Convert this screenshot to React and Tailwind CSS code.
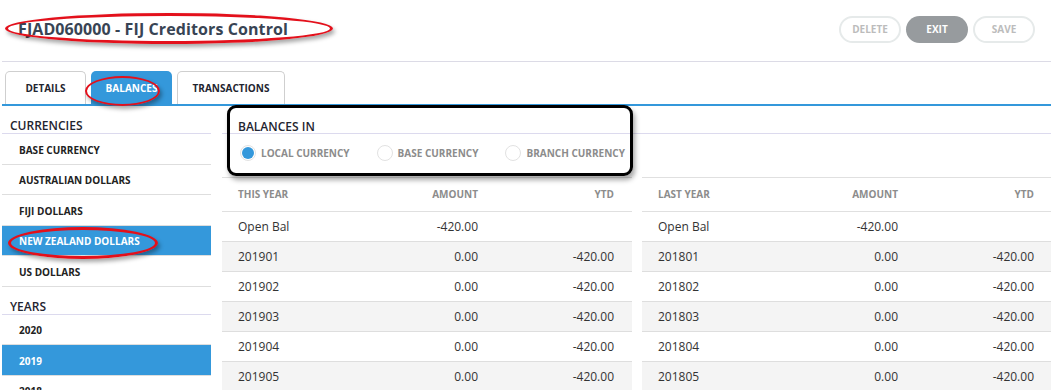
import React from 'react';

const currencies = ['BASE CURRENCY', 'AUSTRALIAN DOLLARS', 'FIJI DOLLARS', 'NEW ZEALAND DOLLARS', 'US DOLLARS'];
const years = ['2020', '2019', '2018', '2017'];

const thisYear = [
  { period: 'Open Bal', amount: '-420.00', ytd: '' },
  { period: '201901', amount: '0.00', ytd: '-420.00' },
  { period: '201902', amount: '0.00', ytd: '-420.00' },
  { period: '201903', amount: '0.00', ytd: '-420.00' },
  { period: '201904', amount: '0.00', ytd: '-420.00' },
  { period: '201905', amount: '0.00', ytd: '-420.00' },
];

const lastYear = thisYear.map((r) => ({ ...r, period: r.period.replace('2019', '2018') }));

function SideItem({ label, active }) {
  return (
    <div
      className={`h-[30.5px] flex items-center pt-[3px] pl-[17px] border-b border-[#dedede] text-[10px] font-bold ${
        active ? 'bg-[#3498db] text-white' : 'text-[#222]'
      }`}
    >
      {label}
    </div>
  );
}

function SideHeader({ label }) {
  return (
    <div className="h-[28px] flex items-end pl-[8px] border-b border-[#dcdaee] text-[12px] leading-[15px] font-semibold text-[#1f2530]">
      {label}
    </div>
  );
}

function Radio({ label, checked }) {
  return (
    <div className="flex items-center gap-[5px] mr-[27px]">
      <span className="w-[16px] h-[16px] rounded-full border border-[#e2e2e2] bg-white flex items-center justify-center">
        {checked && <span className="w-[12px] h-[12px] rounded-full bg-[#3498db]" />}
      </span>
      <span className="text-[10px] font-bold text-[#8c8c8c]">{label}</span>
    </div>
  );
}

function BalanceTable({ title, rows }) {
  return (
    <div className="w-[410px] shrink-0">
      <div className="grid grid-cols-[138px_136px_136px] h-[35px] items-center border-t border-b border-[#e0e0e0] text-[10px] font-bold text-[#8c8c8c]">
        <div className="pl-4">{title}</div>
        <div className="text-right pr-[18px]">AMOUNT</div>
        <div className="text-right pr-[18px]">YTD</div>
      </div>
      {rows.map((r, i) => (
        <div
          key={r.period}
          className={`grid grid-cols-[138px_136px_136px] h-[30px] items-center border-b border-[#dedede] text-[12px] text-[#333] ${
            i % 2 === 1 ? 'bg-[#f4f4f4]' : 'bg-white'
          }`}
        >
          <div className="pl-4">{r.period}</div>
          <div className="text-right pr-[18px]">{r.amount}</div>
          <div className="text-right pr-[18px]">{r.ytd}</div>
        </div>
      ))}
    </div>
  );
}

export default function App() {
  return (
    <div className="relative w-[1051px] h-[390px] overflow-hidden bg-white font-['Open_Sans',sans-serif]">
      <div className="pl-[2px]">
        {/* Title bar */}
        <div className="h-[62px] flex items-center justify-between pb-[4px] pl-4 pr-4 border-b border-[#dcdbe6]">
          <h1 className="text-[16px] font-bold text-[#384454] tracking-[0.1px]">FJAD060000 - FIJ Creditors Control</h1>
          <div className="flex items-center gap-[5px] mt-[2px]">
            <button className="w-[62px] h-[27px] rounded-full border-2 border-[#e6eaea] text-[10px] font-bold text-[#bcbcbc]">DELETE</button>
            <button className="w-[62px] h-[27px] rounded-full bg-[#979b9e] text-[10px] font-bold text-white">EXIT</button>
            <button className="w-[62px] h-[27px] rounded-full border-2 border-[#e6eaea] text-[10px] font-bold text-[#bcbcbc]">SAVE</button>
          </div>
        </div>

        {/* Tabs */}
        <div className="h-[44px] flex items-end gap-[5px] pl-[3px] border-b-2 border-[#3498db]">
          <div className="w-[81px] h-[33px] flex items-center justify-center pt-[1px] rounded-t-[5px] border border-b-0 border-[#cfcfcf] text-[10px] font-bold text-[#1f2530]">DETAILS</div>
          <div className="w-[81px] h-[33px] flex items-center justify-center pt-[1px] rounded-t-[5px] bg-[#3498db] text-[10px] font-bold text-white">BALANCES</div>
          <div className="w-[108px] h-[33px] flex items-center justify-center pt-[1px] rounded-t-[5px] border border-b-0 border-[#cfcfcf] text-[10px] font-bold text-[#1f2530]">TRANSACTIONS</div>
        </div>

        <div className="flex">
          {/* Sidebar */}
          <div className="w-[209px] shrink-0">
            <SideHeader label="CURRENCIES" />
            {currencies.map((c) => (
              <SideItem key={c} label={c} active={c === 'NEW ZEALAND DOLLARS'} />
            ))}
            <SideHeader label="YEARS" />
            {years.map((y) => (
              <SideItem key={y} label={y} active={y === '2019'} />
            ))}
          </div>

          {/* Main */}
          <div className="ml-[11px] flex-1 min-w-0">
            <div className="h-[28px] flex items-end pl-4 border-b border-[#dcdaee] text-[12px] leading-[13px] font-semibold text-[#1f2530]">
              BALANCES IN
            </div>
            <div className="h-[43px] flex items-start pt-[11px] pl-[18px]">
              <Radio label="LOCAL CURRENCY" checked />
              <Radio label="BASE CURRENCY" />
              <Radio label="BRANCH CURRENCY" />
            </div>
            <div className="flex gap-[10px]">
              <BalanceTable title="THIS YEAR" rows={thisYear} />
              <BalanceTable title="LAST YEAR" rows={lastYear} />
            </div>
          </div>
        </div>
      </div>

      {/* Review annotations drawn over the screenshot */}
      <div className="absolute left-[5px] top-[13px] w-[328px] h-[31px] rounded-[50%] border-[3px] border-[#e3101b] shadow-[2px_3px_4px_rgba(0,0,0,0.35)]" />
      <div className="absolute left-[85px] top-[76px] w-[75px] h-[30px] rounded-[50%] border-2 border-[#e3101b] shadow-[2px_3px_4px_rgba(0,0,0,0.35)]" />
      <div className="absolute left-[8px] top-[227px] w-[150px] h-[32px] rounded-[50%] border-[3px] border-[#e3101b] shadow-[2px_3px_4px_rgba(0,0,0,0.35)]" />
      <div className="absolute left-[227px] top-[105px] w-[406px] h-[71px] rounded-[9px] border-[3px] border-black shadow-[2px_4px_5px_rgba(0,0,0,0.35)]" />
    </div>
  );
}
